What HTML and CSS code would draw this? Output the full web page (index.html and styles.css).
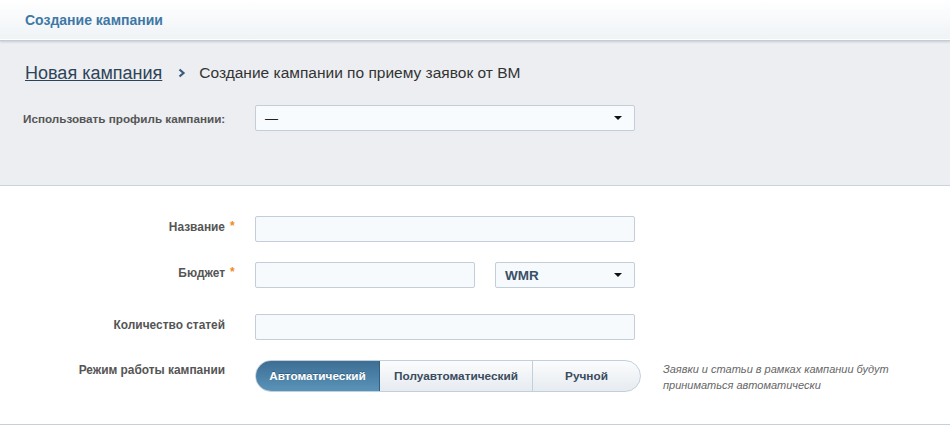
FILE: index.html
```html
<!DOCTYPE html>
<html lang="ru">
<head>
<meta charset="utf-8">
<link rel="stylesheet" href="styles.css">
</head>
<body>
<div class="header"><span class="header-title">Создание кампании</span></div>
<div class="top">
  <div class="crumbs">
    <a class="crumb-link" href="#">Новая кампания</a>
    <span class="crumb-sep">
      <svg width="8" height="10" viewBox="0 0 8 10"><path d="M1.5 1.5 L5.5 5 L1.5 8.5" fill="none" stroke="#3a5a78" stroke-width="2.2"/></svg>
    </span>
    <span class="crumb-cur">Создание кампании по приему заявок от ВМ</span>
  </div>
  <div class="profile-row">
    <div class="profile-label">Использовать профиль кампании:</div>
    <div class="select select-wide"><span class="select-val">—</span><span class="caret"></span></div>
  </div>
</div>
<div class="form">
  <div class="row">
    <div class="label">Название</div><div class="mark">*</div>
    <div class="input input-wide"></div>
  </div>
  <div class="row row-budget">
    <div class="label">Бюджет</div><div class="mark">*</div>
    <div class="budget">
      <div class="input input-mid"></div>
      <div class="select select-cur"><span class="select-val bold">WMR</span><span class="caret"></span></div>
    </div>
  </div>
  <div class="row">
    <div class="label">Количество статей</div><div class="mark"></div>
    <div class="input input-wide"></div>
  </div>
  <div class="row row-mode">
    <div class="label label-mode">Режим работы кампании</div><div class="mark"></div>
    <div class="mode">
      <div class="seg">
        <span class="seg-btn seg-active">Автоматический</span>
        <span class="seg-btn seg-semi">Полуавтоматический</span>
        <span class="seg-btn seg-manual">Ручной</span>
      </div>
      <div class="hint">Заявки и статьи в рамках кампании будут<br>приниматься автоматически</div>
    </div>
  </div>
</div>
</body>
</html>
```
FILE: styles.css
```css
html, body { margin: 0; padding: 0; background: #fff; }
body { font-family: "Liberation Sans", Arial, sans-serif; color: #333; width: 950px; }

.header {
  height: 41px;
  background: linear-gradient(#ffffff, #eff3f6);
  border-bottom: 1px solid #c5cdd3;
  box-shadow: inset 0 -1px 0 #ffffff, 0 1px 2px rgba(150,165,180,0.45);
  box-sizing: border-box;
  padding-left: 25px;
  display: flex;
  align-items: center;
  position: relative;
}
.header-title { font-size: 14px; font-weight: bold; color: #3e78a6; }

.top {
  background: #eceef2;
  border-bottom: 1px solid #c9d3dc;
  padding: 17px 0 0 0;
  height: 145px;
  box-sizing: border-box;
}
.crumbs { display: flex; align-items: center; padding-left: 25px; height: 30px; }
.crumb-link { font-size: 18px; color: #2d4458; text-decoration: underline; }
.crumb-sep { margin: 0 13px 0 16px; display: flex; align-items: center; }
.crumb-cur { font-size: 15.5px; color: #333; }

.profile-row { display: flex; align-items: center; margin-top: 17px; padding-left: 23px; }
.profile-label { width: 232px; font-size: 11.7px; font-weight: bold; color: #555; }

.select, .input {
  height: 26px;
  box-sizing: border-box;
  border: 1px solid #c3ced8;
  border-radius: 2px;
  background: #f7fafd;
}
.select { display: flex; align-items: center; justify-content: space-between; padding: 0 10px 0 9px; }
.select-wide { width: 380px; background: #f8fbfe; }
.select-val { font-size: 13px; color: #222; }
.select-val.bold { font-weight: bold; color: #3a5068; font-size: 13.5px; }
.caret { width: 0; height: 0; border-left: 4px solid transparent; border-right: 4px solid transparent; border-top: 4px solid #111; margin-right: 2px; }

.form {
  padding: 30px 0 0 0;
  border-bottom: 1px solid #c3d1dc;
  height: 239px;
  box-sizing: border-box;
}
.row { display: grid; grid-template-columns: 225px 30px 1fr; margin-bottom: 20px; }
.row-budget { margin-bottom: 26px; }
.row-mode { margin-bottom: 0; }
.label { font-size: 11.9px; font-weight: bold; color: #555; text-align: right; line-height: 22px; }
.label-mode { line-height: 20px; }
.mark { color: #f08a24; font-size: 12px; font-weight: bold; line-height: 20px; padding-left: 5px; }
.input-wide { width: 380px; }
.budget { display: flex; gap: 20px; }
.input-mid { width: 220px; }
.select-cur { width: 140px; }

.mode { display: flex; align-items: flex-start; }
.seg {
  display: flex;
  height: 32px;
  width: 386px;
  box-sizing: border-box;
  border: 1px solid #c3d0db;
  border-radius: 16px;
  overflow: hidden;
  background: linear-gradient(#fbfcfd, #e6ebf0);
}
.seg-btn { display: flex; align-items: center; justify-content: center; font-size: 11.8px; font-weight: bold; color: #3b4b5d; }
.seg-active {
  width: 123px;
  color: #fff;
  background: linear-gradient(#3c6d93, #5b94ba);
  border-right: 1px solid #335f82;
  text-shadow: 0 -1px 0 rgba(0,0,0,0.25);
  margin: -1px 0 -1px -1px;
  padding-left: 1px;
}
.seg-semi { width: 152px; border-right: 1px solid #c3d0db; }
.seg-manual { flex: 1; }
.hint { margin-left: 22px; font-size: 11px; font-style: italic; color: #666; line-height: 16px; padding-top: 1px; }
```
